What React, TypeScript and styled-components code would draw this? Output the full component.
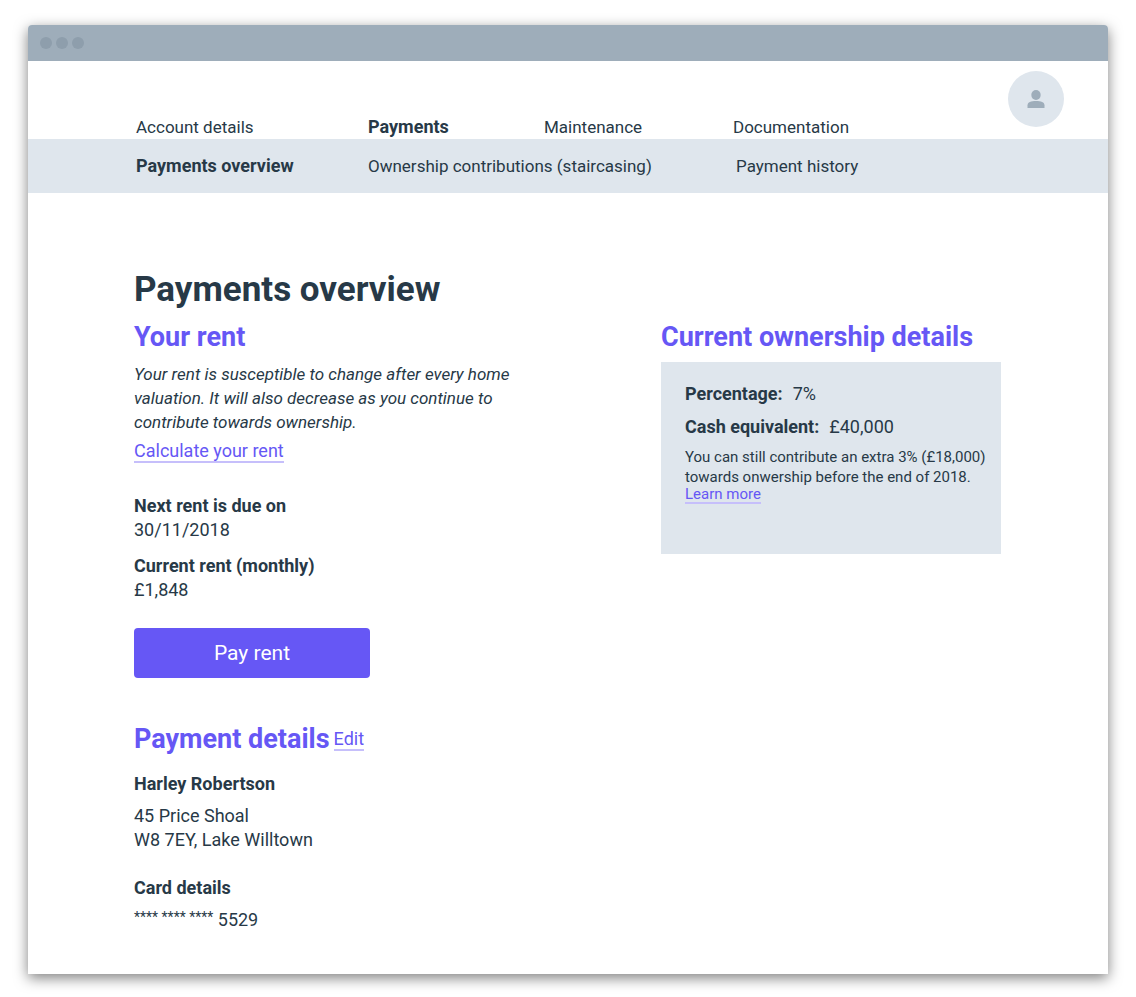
import React from "react";
import styled, { createGlobalStyle } from "styled-components";

const color = {
  ink: "#273947",
  accent: "#6657f5",
  underline: "#c6bffb",
  panel: "#dfe6ed",
  chrome: "#9eadba",
  dot: "#8e9eac",
};

const GlobalStyle = createGlobalStyle`
  * { box-sizing: border-box; }
  body {
    margin: 0;
    background: #fff;
    color: ${color.ink};
    font-family: Roboto, "Liberation Sans", sans-serif;
    font-size: 18px;
    line-height: 24px;
  }
  h1, h2, p, dl, dd { margin: 0; }
`;

const Window = styled.div`
  margin: 25px 28px 24px;
  background: #fff;
  border-radius: 4px 4px 0 0;
  box-shadow: 0 4px 14px rgba(0, 0, 0, 0.5);
`;

const TitleBar = styled.div`
  display: flex;
  align-items: center;
  gap: 4px;
  height: 36px;
  padding: 0 12px;
  background: ${color.chrome};
  border-radius: 4px 4px 0 0;
`;

const Dot = styled.span`
  width: 12px;
  height: 12px;
  border-radius: 50%;
  background: ${color.dot};
`;

const Header = styled.header`
  display: flex;
  justify-content: space-between;
  min-height: 78px;
  padding: 10px 44px 0 108px;
`;

const NavRow = styled.nav<{ $columns: string }>`
  display: grid;
  grid-template-columns: ${(p) => p.$columns};
  align-self: flex-end;
  white-space: nowrap;
`;

const SubHeader = styled.div`
  padding: 15px 44px 15px 108px;
  background: ${color.panel};
`;

const NavLink = styled.a<{ $active?: boolean }>`
  color: inherit;
  font-size: ${(p) => (p.$active ? 18 : 17)}px;
  font-weight: ${(p) => (p.$active ? 700 : 400)};
  text-decoration: none;
`;

const Avatar = styled.button`
  display: grid;
  place-items: center;
  width: 56px;
  height: 56px;
  padding: 0;
  border: 0;
  border-radius: 50%;
  background: ${color.panel};
  color: ${color.chrome};
`;

const Main = styled.main`
  padding: 77px 107px 42px 106px;
`;

const Title = styled.h1`
  margin-bottom: 10px;
  font-size: 35px;
  line-height: 40px;
`;

const Columns = styled.div`
  display: grid;
  grid-template-columns: minmax(0, 1fr) 340px;
  align-items: start;
`;

const SectionHead = styled.div`
  display: flex;
  align-items: center;
  gap: 4px;
  margin-bottom: 8px;
`;

const SectionTitle = styled.h2`
  color: ${color.accent};
  font-size: 27px;
  line-height: 34px;
  white-space: nowrap;
`;

const Note = styled.p`
  max-width: 400px;
  margin-bottom: 5px;
  font-size: 17px;
  font-style: italic;
`;

const TextLink = styled.a<{ $small?: boolean }>`
  display: inline-block;
  padding-top: ${(p) => (p.$small ? 0 : 2)}px;
  border-bottom: 2px solid ${color.underline};
  color: ${color.accent};
  font-size: ${(p) => (p.$small ? 15 : 18)}px;
  line-height: ${(p) => (p.$small ? 15 : 20)}px;
  text-decoration: none;
  vertical-align: top;
`;

const Facts = styled.dl`
  display: grid;
  gap: 12px;
  margin: 31px 0 26px;
`;

const Term = styled.dt`
  font-weight: 700;
`;

const PayButton = styled.button`
  display: block;
  width: 236px;
  height: 50px;
  margin-bottom: 44px;
  padding: 0;
  border: 0;
  border-radius: 4px;
  background: ${color.accent};
  color: #fff;
  font: 400 21px/24px Roboto, "Liberation Sans", sans-serif;
`;

const Details = styled.dl`
  display: grid;
  gap: 24px;
  margin-top: 16px;
`;

const DetailText = styled.dd`
  margin-top: 8px;
`;

const Mask = styled.span`
  font-size: 14px;
  line-height: 17px;
  vertical-align: text-top;
`;

const OwnershipCard = styled.div`
  min-height: 192px;
  padding: 20px 24px;
  background: ${color.panel};
`;

const OwnershipFacts = styled.dl`
  display: grid;
  gap: 9px;
`;

const InlineFact = styled.div`
  display: flex;
  gap: 10px;
`;

const SmallText = styled.p`
  margin-top: 8px;
  font-size: 15px;
  line-height: 20px;
  white-space: nowrap;
`;

export default function App() {
  return (
    <>
      <GlobalStyle />
      <Window>
        <TitleBar>
          <Dot />
          <Dot />
          <Dot />
        </TitleBar>
        <Header>
          <NavRow $columns="232px 176px 189px auto" aria-label="Main">
            <NavLink href="#account">Account details</NavLink>
            <NavLink href="#payments" $active>Payments</NavLink>
            <NavLink href="#maintenance">Maintenance</NavLink>
            <NavLink href="#documentation">Documentation</NavLink>
          </NavRow>
          <Avatar type="button" aria-label="Profile">
            <svg width="18" height="20" viewBox="0 0 18 20" fill="currentColor" aria-hidden="true">
              <ellipse cx="9" cy="6" rx="4.7" ry="5" />
              <path d="M0.5 19V16.2C0.5 13.2 4 12 9 12s8.500 1.200 8.500 4.200V19z" />
            </svg>
          </Avatar>
        </Header>
        <SubHeader>
          <NavRow $columns="232px 368px auto" aria-label="Payments">
            <NavLink href="#overview" $active>Payments overview</NavLink>
            <NavLink href="#contributions">Ownership contributions (staircasing)</NavLink>
            <NavLink href="#history">Payment history</NavLink>
          </NavRow>
        </SubHeader>
        <Main>
          <Title>Payments overview</Title>
          <Columns>
            <div>
              <section>
                <SectionHead>
                  <SectionTitle>Your rent</SectionTitle>
                </SectionHead>
                <Note>
                  Your rent is susceptible to change after every home<br />
                  valuation. It will also decrease as you continue to<br />
                  contribute towards ownership.
                </Note>
                <TextLink href="#calculate">Calculate your rent</TextLink>
                <Facts>
                  <div>
                    <Term>Next rent is due on</Term>
                    <dd>30/11/2018</dd>
                  </div>
                  <div>
                    <Term>Current rent (monthly)</Term>
                    <dd>£1,848</dd>
                  </div>
                </Facts>
                <PayButton type="button">Pay rent</PayButton>
              </section>
              <section>
                <SectionHead>
                  <SectionTitle>Payment details</SectionTitle>
                  <TextLink href="#edit">Edit</TextLink>
                </SectionHead>
                <Details>
                  <div>
                    <Term>Harley Robertson</Term>
                    <DetailText>
                      45 Price Shoal<br />
                      W8 7EY, Lake Willtown
                    </DetailText>
                  </div>
                  <div>
                    <Term>Card details</Term>
                    <DetailText>
                      <Mask>**** **** ****</Mask> 5529
                    </DetailText>
                  </div>
                </Details>
              </section>
            </div>
            <section>
              <SectionHead>
                <SectionTitle>Current ownership details</SectionTitle>
              </SectionHead>
              <OwnershipCard>
                <OwnershipFacts>
                  <InlineFact>
                    <Term>Percentage:</Term>
                    <dd>7%</dd>
                  </InlineFact>
                  <InlineFact>
                    <Term>Cash equivalent:</Term>
                    <dd>£40,000</dd>
                  </InlineFact>
                </OwnershipFacts>
                <SmallText>
                  You can still contribute an extra 3% (£18,000)<br />
                  towards onwership before the end of 2018.
                </SmallText>
                <TextLink href="#learn" $small>Learn more</TextLink>
              </OwnershipCard>
            </section>
          </Columns>
        </Main>
      </Window>
    </>
  );
}
